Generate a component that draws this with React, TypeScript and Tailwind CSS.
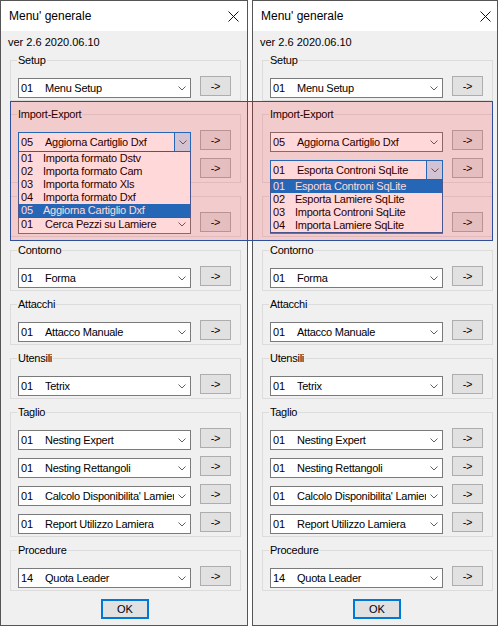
import React from "react";

type Item = { num: string; name: string };

function Chevron() {
  return (
    <svg width="8" height="5" viewBox="0 0 8 5" className="mt-[1px]">
      <path d="M0.5 0.5 L4 4 L7.5 0.5" fill="none" stroke="#606060" strokeWidth="1" />
    </svg>
  );
}

function DropList({ items, selected }: { items: Item[]; selected: number }) {
  return (
    <div className="absolute left-[-1px] top-[18px] z-10 w-[173px] border border-[#2a64a8] bg-white">
      {items.map((it, i) => (
        <div
          key={i}
          className={
            i === selected
              ? "flex h-[13px] items-center whitespace-nowrap bg-[#0078d7] pl-[2px] leading-[13px] text-white"
              : "flex h-[13px] items-center whitespace-nowrap pl-[2px] leading-[13px] text-black"
          }
        >
          <span className="w-[22px] tracking-normal">{it.num}</span>
          <span>{it.name}</span>
        </div>
      ))}
    </div>
  );
}

function Combo({
  num,
  name,
  focused,
  list,
  selected,
}: {
  num: string;
  name: string;
  focused?: boolean;
  list?: Item[];
  selected?: number;
}) {
  return (
    <div
      className={
        focused
          ? "relative flex h-[20px] w-[173px] border border-[#0078d7] bg-white"
          : "relative flex h-[20px] w-[173px] border border-[#7a7a7a] bg-white"
      }
    >
      <div className="flex min-w-0 flex-1 items-center overflow-hidden whitespace-nowrap pl-[2px] leading-[13px]">
        <span className="w-[24px] shrink-0 tracking-normal">{num}</span>
        <span>{name}</span>
      </div>
      <div
        className={
          focused
            ? "flex w-[16px] shrink-0 items-center justify-center border-l border-[#0078d7] bg-[#cce4f7]"
            : "flex w-[16px] shrink-0 items-center justify-center"
        }
      >
        <Chevron />
      </div>
      {list ? <DropList items={list} selected={selected ?? 0} /> : null}
    </div>
  );
}

function ArrowButton() {
  return (
    <div className="flex h-[20px] w-[31px] items-center justify-center border border-[#adadad] bg-[#e1e1e1] leading-[13px]">
      -&gt;
    </div>
  );
}

type RowDef = { num: string; name: string; focused?: boolean; list?: Item[]; selected?: number };

function Row({ r }: { r: RowDef }) {
  return (
    <div className="flex h-[22px] items-start gap-[9px]">
      <div className="mt-[2px]">
        <Combo num={r.num} name={r.name} focused={r.focused} list={r.list} selected={r.selected} />
      </div>
      <ArrowButton />
    </div>
  );
}

function Group({ label, rows }: { label: string; rows: RowDef[] }) {
  return (
    <div className="relative ml-[9px] w-[231px] border border-[#dcdcdc] pb-[2px] pl-[7px] pt-[15px]">
      <span className="absolute left-[6px] top-[-7px] bg-[#f0f0f0] px-[1px] leading-[13px]">{label}</span>
      <div className="flex flex-col gap-[6px]">
        {rows.map((r, i) => (
          <Row key={i} r={r} />
        ))}
      </div>
    </div>
  );
}

const importList: Item[] = [
  { num: "01", name: "Importa formato Dstv" },
  { num: "02", name: "Importa formato Cam" },
  { num: "03", name: "Importa formato Xls" },
  { num: "04", name: "Importa formato Dxf" },
  { num: "05", name: "Aggiorna Cartiglio Dxf" },
];

const exportList: Item[] = [
  { num: "01", name: "Esporta Controni SqLite" },
  { num: "02", name: "Esporta Lamiere SqLite" },
  { num: "03", name: "Importa Controni SqLite" },
  { num: "04", name: "Importa Lamiere SqLite" },
];

function Window({ variant, width }: { variant: 1 | 2; width: string }) {
  const importRows: RowDef[] =
    variant === 1
      ? [
          { num: "05", name: "Aggiorna Cartiglio Dxf", focused: true, list: importList, selected: 4 },
          { num: "01", name: "Esporta Controni SqLite" },
        ]
      : [
          { num: "05", name: "Aggiorna Cartiglio Dxf" },
          { num: "01", name: "Esporta Controni SqLite", focused: true, list: exportList, selected: 0 },
        ];
  return (
    <div className={`flex h-[626px] ${width} shrink-0 flex-col border border-[#555555] bg-[#f0f0f0]`}>
      <div className="flex h-[30px] shrink-0 items-center bg-white">
        <div className="w-[227px] pl-[8px] text-[12px] leading-[14px] text-black">Menu' generale</div>
        <svg width="11" height="11" viewBox="0 0 11 11">
          <path d="M0.5 0.5 L10.5 10.5 M10.5 0.5 L0.5 10.5" stroke="#111111" strokeWidth="1" fill="none" />
        </svg>
      </div>
      <div className="flex flex-1 flex-col text-[11px] text-black">
        <div className="pl-[7px] pt-[5px] leading-[13px]">ver 2.6 2020.06.10</div>
        <div className="mt-[11px] flex flex-col gap-[13px] tracking-[-0.25px]">
          <Group label="Setup" rows={[{ num: "01", name: "Menu Setup" }]} />
          <Group label="Import-Export" rows={importRows} />
          <Group label="Lamiere" rows={[{ num: "01", name: "Cerca Pezzi su Lamiere" }]} />
          <Group label="Contorno" rows={[{ num: "01", name: "Forma" }]} />
          <Group label="Attacchi" rows={[{ num: "01", name: "Attacco Manuale" }]} />
          <Group label="Utensili" rows={[{ num: "01", name: "Tetrix" }]} />
          <Group
            label="Taglio"
            rows={[
              { num: "01", name: "Nesting Expert" },
              { num: "01", name: "Nesting Rettangoli" },
              { num: "01", name: "Calcolo Disponibilita' Lamiere" },
              { num: "01", name: "Report Utilizzo Lamiera" },
            ]}
          />
          <Group label="Procedure" rows={[{ num: "14", name: "Quota Leader" }]} />
        </div>
        <div className="ml-[100px] mt-[8px] flex h-[20px] w-[48px] items-center justify-center border-2 border-[#0078d7] bg-[#e1e1e1] leading-[13px]">
          OK
        </div>
      </div>
    </div>
  );
}

export default function App() {
  return (
    <div className="relative h-[627px] w-[500px] overflow-hidden bg-white font-['Liberation_Sans',Arial,sans-serif]">
      <div className="flex gap-[4px]">
        <Window variant={1} width="w-[248px]" />
        <Window variant={2} width="w-[246px]" />
      </div>
      <div className="pointer-events-none absolute left-[10px] top-[101px] z-20 h-[140px] w-[483px] border border-[#2e4f9a] bg-[rgba(255,0,0,0.15)]" />
    </div>
  );
}
